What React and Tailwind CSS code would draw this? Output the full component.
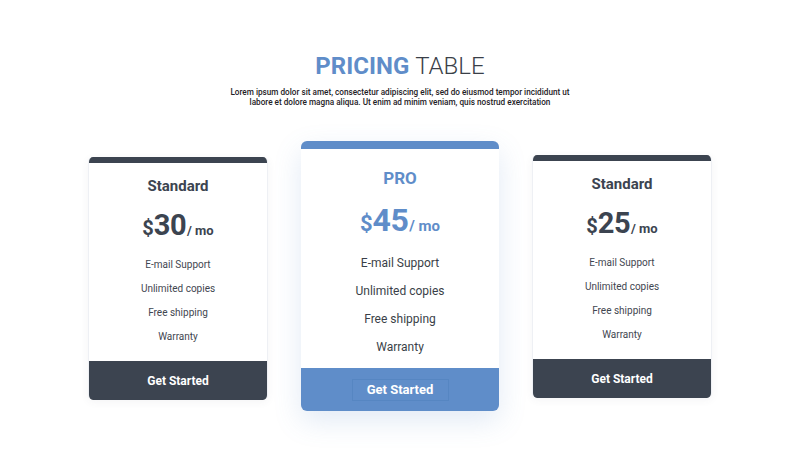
import React from 'react';

const features = ['E-mail Support', 'Unlimited copies', 'Free shipping', 'Warranty'];

function StandardCard({ price, className }) {
  return (
    <div className={`w-[180px] rounded-[5px] overflow-hidden bg-white border-x border-[#eef0f4] flex flex-col shadow-[0_2px_8px_rgba(60,70,90,0.06)] ${className}`}>
      <div className="h-[6px] bg-[#3c4450]" />
      <div className="pt-[13px] flex flex-col items-center">
        <div className="h-[20px] leading-[20px] text-[15px] font-bold text-[#3c4450]">Standard</div>
        <div className="mt-[11px] h-[36px] flex items-baseline text-[#3c4450] font-bold leading-[36px]">
          <span className="text-[20px]">$</span>
          <span className="text-[29px] tracking-[-0.5px]">{price}</span>
          <span className="text-[13px] ml-[1px]">/ mo</span>
        </div>
        <ul className="mt-[10px] mb-[12px] flex flex-col items-center">
          {features.map(f => (
            <li key={f} className="h-[24px] leading-[24px] text-[10px] text-[#3f4650]">{f}</li>
          ))}
        </ul>
      </div>
      <div className="h-[39px] bg-[#3c4450] flex items-center justify-center">
        <span className="text-[12px] font-bold text-white">Get Started</span>
      </div>
    </div>
  );
}

function ProCard() {
  return (
    <div className="w-[198px] rounded-[6px] overflow-hidden bg-white flex flex-col shadow-[0_10px_28px_rgba(95,141,201,0.18)]">
      <div className="h-[8px] bg-[#5f8dc9]" />
      <div className="pt-[18px] flex flex-col items-center">
        <div className="h-[22px] leading-[22px] text-[17px] font-bold text-[#5f8dc9]">PRO</div>
        <div className="mt-[11px] h-[40px] flex items-baseline text-[#5f8dc9] font-bold leading-[40px]">
          <span className="text-[22px]">$</span>
          <span className="text-[32px] tracking-[-0.5px]">45</span>
          <span className="text-[15px] ml-[1px]">/ mo</span>
        </div>
        <ul className="mt-[9px] mb-[7px] flex flex-col items-center">
          {features.map(f => (
            <li key={f} className="h-[28px] leading-[28px] text-[12px] text-[#3a3f48]">{f}</li>
          ))}
        </ul>
      </div>
      <div className="h-[43px] bg-[#5f8dc9] flex items-center justify-center">
        <div className="w-[97px] h-[22px] border border-[#5686c2] flex items-center justify-center">
          <span className="text-[13px] font-bold text-white">Get Started</span>
        </div>
      </div>
    </div>
  );
}

export default function App() {
  return (
    <div className="w-[800px] h-[450px] bg-white flex flex-col items-center font-['Roboto',sans-serif]">
      <h1 className="mt-[52px] h-[28px] leading-[28px] text-[24px] text-[#3a3f48]">
        <span className="font-bold text-[#5f8dc9]">PRICING</span>{' '}
        <span className="font-light">TABLE</span>
      </h1>
      <p className="mt-[7px] w-[352px] text-center text-[8.2px] leading-[10px] font-medium text-[#1e2126]">
        Lorem ipsum dolor sit amet, consectetur adipiscing elit, sed do eiusmod tempor incididunt ut labore et dolore magna aliqua. Ut enim ad minim veniam, quis nostrud exercitation
      </p>
      <div className="mt-[34px] flex items-start gap-[33px]">
        <StandardCard price="30" className="mt-[16px]" />
        <ProCard />
        <StandardCard price="25" className="mt-[14px]" />
      </div>
    </div>
  );
}
